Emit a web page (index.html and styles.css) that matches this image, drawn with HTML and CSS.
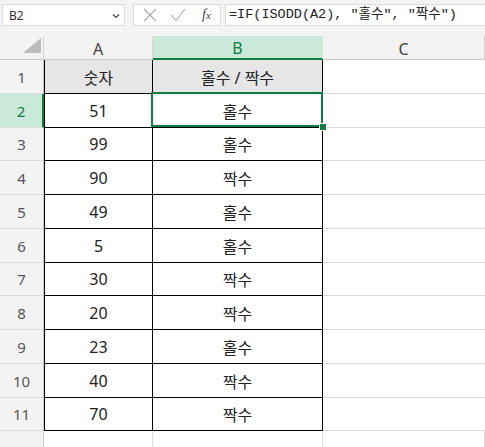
FILE: index.html
```html
<!DOCTYPE html>
<html lang="ko">
<head>
<meta charset="utf-8">
<link rel="stylesheet" href="styles.css">
</head>
<body>
<div class="toolbar">
  <div class="namebox">
    <span>B2</span>
    <svg class="chev" width="8" height="6" viewBox="0 0 8 6"><path d="M1 1.5 L4 4.5 L7 1.5" fill="none" stroke="#444" stroke-width="1.2"/></svg>
  </div>
  <div class="fxbox">
    <svg width="14" height="14" viewBox="0 0 14 14"><path d="M1 1 L13 13 M13 1 L1 13" stroke="#a6a6a6" stroke-width="1.1" fill="none"/></svg>
    <svg width="16" height="14" viewBox="0 0 16 14"><path d="M1 7 L6 12.5 L15 1" stroke="#a6a6a6" stroke-width="1.1" fill="none"/></svg>
    <span class="fx">f<span class="fxx">x</span></span>
  </div>
  <div class="formula">=IF(ISODD(A2), "홀수", "짝수")</div>
</div>
<div class="sheet">
  <div class="corner"><svg width="20" height="16" viewBox="0 0 20 16"><path d="M19 0 L19 15 L1 15 Z" fill="#bdbdbd"/></svg></div>
  <div class="colhead">A</div>
  <div class="colhead sel">B</div>
  <div class="colhead">C</div>

  <div class="rowhead">1</div><div class="cell a hdr">숫자</div><div class="cell b hdr">홀수 / 짝수</div><div class="cell c"></div>
  <div class="rowhead sel">2</div><div class="cell a">51</div><div class="cell b active">홀수</div><div class="cell c"></div>
  <div class="rowhead">3</div><div class="cell a">99</div><div class="cell b">홀수</div><div class="cell c"></div>
  <div class="rowhead">4</div><div class="cell a">90</div><div class="cell b">짝수</div><div class="cell c"></div>
  <div class="rowhead">5</div><div class="cell a">49</div><div class="cell b">홀수</div><div class="cell c"></div>
  <div class="rowhead">6</div><div class="cell a">5</div><div class="cell b">홀수</div><div class="cell c"></div>
  <div class="rowhead">7</div><div class="cell a">30</div><div class="cell b">짝수</div><div class="cell c"></div>
  <div class="rowhead">8</div><div class="cell a">20</div><div class="cell b">짝수</div><div class="cell c"></div>
  <div class="rowhead">9</div><div class="cell a">23</div><div class="cell b">홀수</div><div class="cell c"></div>
  <div class="rowhead">10</div><div class="cell a">40</div><div class="cell b">짝수</div><div class="cell c"></div>
  <div class="rowhead">11</div><div class="cell a">70</div><div class="cell b">짝수</div><div class="cell c"></div>
  <div class="rowhead last"></div><div class="cell e ea"></div><div class="cell e"></div><div class="cell e"></div>
</div>
</body>
</html>
```

FILE: styles.css
```css
* { box-sizing: border-box; }
html, body { margin: 0; padding: 0; }
body {
  width: 485px;
  height: 447px;
  overflow: hidden;
  background: #ffffff;
  font-family: "Noto Sans", "Noto Sans CJK KR", sans-serif;
  color: #222;
}
.toolbar {
  height: 36px;
  background: #f3f3f3;
  display: flex;
  align-items: flex-start;
  padding: 4px 0 0 2px;
  gap: 8px;
}
.namebox {
  width: 123px;
  height: 22px;
  background: #fff;
  border: 1px solid #dcdcdc;
  display: flex;
  align-items: center;
  justify-content: space-between;
  padding: 0 4px 0 6px;
  font-size: 12px;
  color: #333;
}
.chev { margin-top: 1px; }
.fxbox {
  width: 88px;
  height: 22px;
  background: #fff;
  border: 1px solid #dcdcdc;
  display: flex;
  align-items: center;
  padding-left: 9px;
  gap: 13px;
}
.fx {
  font-family: "Liberation Serif", serif;
  font-style: italic;
  font-size: 14px;
  color: #444;
  margin-left: 3px;
}
.fxx { font-size: 11px; }
.formula {
  flex: 1;
  margin-left: -4px;
  height: 22px;
  background: #fff;
  border: 1px solid #dcdcdc;
  border-right: none;
  padding-left: 3px;
  font-family: "Liberation Mono", "Noto Sans CJK KR", monospace;
  font-size: 13.5px;
  line-height: 20px;
  color: #222;
  white-space: nowrap;
}
.sheet {
  display: grid;
  grid-template-columns: 44px 109px 170px 1fr;
  grid-template-rows: 24px 34px 34px 33px 34px 34px 34px 33px 34px 34px 34px 33px 1fr;
  height: 411px;
}
.corner {
  background: #f3f3f3;
  border-right: 1px solid #d4d4d4;
  border-bottom: 1px solid #c8c8c8;
  display: flex;
  align-items: flex-end;
  justify-content: flex-end;
  padding: 0 1px 5px 0;
}
.colhead {
  background: #f3f3f3;
  border-right: 1px solid #d4d4d4;
  border-bottom: 1px solid #c8c8c8;
  display: flex;
  align-items: center;
  justify-content: center;
  font-size: 16px;
  color: #444;
  padding-top: 2px;
}
.colhead.sel {
  background: #cbe9d8;
  color: #107c41;
  border-bottom: 2px solid #107c41;
  border-right-color: #cbe9d8;
}
.rowhead {
  background: #f3f3f3;
  border-right: 1px solid #c8c8c8;
  border-bottom: 1px solid #dcdcdc;
  display: flex;
  align-items: center;
  justify-content: center;
  font-size: 15px;
  color: #555;
}
.rowhead.sel {
  background: #cbe9d8;
  color: #107c41;
  border-right: 2px solid #107c41;
}
.rowhead.last { border-bottom: none; }
.cell {
  border-right: 1px solid #000;
  border-bottom: 1px solid #000;
  display: flex;
  align-items: center;
  justify-content: center;
  font-size: 16px;
  color: #222;
}
.cell.a { border-left: 1px solid #000; }
.cell.hdr { background: #e6e6e6; }
.cell.c {
  border-right: none;
  border-bottom: 1px solid #d9d9d9;
}
.cell.e {
  border-bottom: none;
  border-right: 1px solid #d9d9d9;
}
.cell.e.ea { border-left: none; }
.cell.active { position: relative; }
.cell.active::after {
  content: "";
  position: absolute;
  left: -2px;
  top: -2px;
  right: -1px;
  bottom: 0;
  border: 2px solid #107c41;
}
.cell.active::before {
  content: "";
  position: absolute;
  right: -4px;
  bottom: -3px;
  width: 6px;
  height: 6px;
  background: #107c41;
  box-shadow: 0 0 0 1px #fff;
  z-index: 2;
}
```
